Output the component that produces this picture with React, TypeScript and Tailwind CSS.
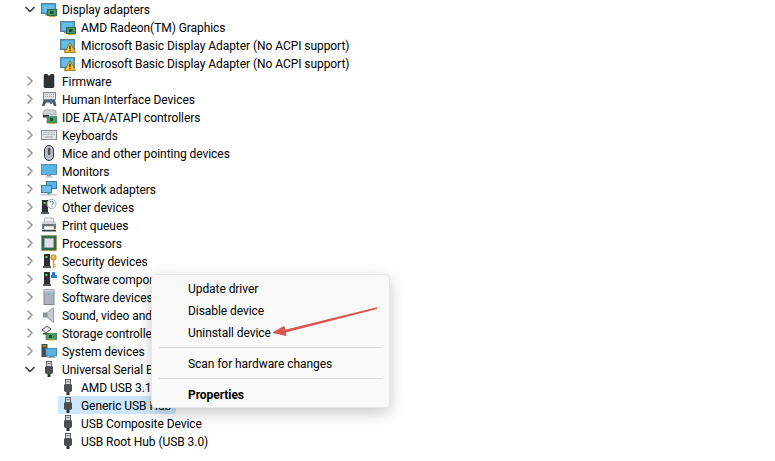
import React from 'react';

type IconName =
  | 'display' | 'displayWarn' | 'firmware' | 'hid' | 'ide' | 'keyboard' | 'mouse' | 'monitor'
  | 'network' | 'other' | 'printer' | 'cpu' | 'security' | 'software' | 'softdev' | 'sound'
  | 'storage' | 'system' | 'usb';

const Card = () => (
  <g>
    <rect x="6.5" y="8.5" width="9" height="6" fill="#4a9a68" stroke="#2c6a49" />
    <rect x="9" y="10" width="3.5" height="3" fill="#1f4d35" />
    <rect x="8" y="15" width="6.5" height="1" fill="#e0a52c" />
  </g>
);

const Screen = () => (
  <g>
    <rect x="0.5" y="2.5" width="14" height="10" fill="#4aa6dc" stroke="#5f7f95" />
    <rect x="2" y="4" width="11" height="7" fill="#63c0ec" />
    <rect x="4" y="13" width="5" height="1.5" fill="#8a9aa6" />
  </g>
);

const Warn = () => (
  <g>
    <path d="M10 5.5 L15.5 15.5 L4.5 15.5 Z" fill="#f5c02c" stroke="#8f6a10" strokeWidth="0.8" />
    <rect x="9.4" y="8.6" width="1.2" height="3.8" fill="#222" />
    <rect x="9.4" y="13.1" width="1.2" height="1.2" fill="#222" />
  </g>
);

const Tower = () => (
  <g>
    <rect x="3" y="1" width="6" height="12" fill="#2b2f33" />
    <rect x="4.5" y="3" width="2" height="2" fill="#5ed06a" />
    <rect x="2" y="13" width="8" height="2" fill="#555b60" />
  </g>
);

const DeviceIcon = ({ name }: { name: IconName }) => {
  const art: Record<IconName, React.ReactNode> = {
    display: <><Screen /><Card /></>,
    displayWarn: <><Screen /><Warn /></>,
    firmware: (
      <g>
        <rect x="3" y="1" width="10" height="14" rx="1" fill="#2f3235" />
        <path d="M6.5 1 a1.5 1.5 0 0 0 3 0 Z" fill="#fff" />
        <path d="M2 3h1M2 5h1M2 7h1M2 9h1M2 11h1M2 13h1M13 3h1M13 5h1M13 7h1M13 9h1M13 11h1M13 13h1" stroke="#8a8f94" strokeWidth="1" />
      </g>
    ),
    hid: (
      <g>
        <rect x="2.5" y="1.5" width="12" height="7" fill="#dfe3e7" stroke="#80878d" />
        <path d="M4 3.5h9M4 5.5h9" stroke="#9aa1a7" strokeDasharray="1 1" />
        <path d="M1 15 L2.5 9 H14 L15.5 15 L13 15 L11.5 11.5 H5 L3.5 15 Z" fill="#50565c" />
        <rect x="9" y="8" width="2" height="5" fill="#3b78c4" />
      </g>
    ),
    ide: (
      <g>
        <path d="M2 3 L4 1 H14 L15 3 V6 H2 Z" fill="#cfd3d6" stroke="#7d8387" strokeWidth="0.6" />
        <rect x="2" y="6" width="6" height="2.5" fill="#3d4246" />
        <rect x="6" y="7.5" width="10" height="6.5" fill="#4a9a68" stroke="#2c6a49" strokeWidth="0.6" />
        <rect x="9" y="9" width="3" height="3" fill="#1f4d35" />
        <rect x="8" y="14" width="6" height="1" fill="#e0a52c" />
      </g>
    ),
    keyboard: (
      <g>
        <rect x="0.5" y="3.5" width="15" height="9" fill="#e3e6e9" stroke="#868c92" />
        <path d="M2 5.5h12M2 7.5h12" stroke="#9ea5ab" strokeDasharray="1 0.6" />
        <path d="M4 10h8" stroke="#9ea5ab" />
      </g>
    ),
    mouse: (
      <g>
        <rect x="3.5" y="0.5" width="9" height="15" rx="4.5" fill="#b9bfc4" stroke="#33383c" />
        <rect x="6.8" y="3" width="2.6" height="7" rx="1" fill="#4d5358" />
      </g>
    ),
    monitor: (
      <g>
        <rect x="0.5" y="1.5" width="15" height="10" fill="#58b4e6" stroke="#5b8fae" />
        <rect x="6" y="11.5" width="4" height="2" fill="#9aa6ae" />
        <rect x="4" y="13.5" width="8" height="1" fill="#b4bdc3" />
      </g>
    ),
    network: (
      <g>
        <rect x="5.5" y="0.5" width="10" height="7" fill="#58b4e6" stroke="#3f7ca3" />
        <rect x="0.5" y="4.5" width="10" height="7" fill="#6cc0ea" stroke="#3f7ca3" />
        <rect x="0" y="13" width="16" height="1.5" fill="#c4cbd0" />
        <path d="M5.5 11.5 L8 14 L10.5 11.5 Z" fill="#48b25a" />
      </g>
    ),
    other: (
      <g>
        <rect x="1" y="1" width="6" height="12" fill="#2b2f33" />
        <rect x="2.5" y="3" width="2" height="2" fill="#5ed06a" />
        <rect x="0" y="13" width="8" height="2" fill="#555b60" />
        <circle cx="10.5" cy="5" r="4.5" fill="#fff" stroke="#9aa4ad" />
        <path d="M9 3.8 a1.6 1.6 0 1 1 2 1.6 v0.8 M11 7.2 v0.8" fill="none" stroke="#3a78c4" strokeWidth="1" />
      </g>
    ),
    printer: (
      <g>
        <path d="M4 1 H12 L13 5 H3 Z" fill="#eef0f2" stroke="#8a9095" strokeWidth="0.6" />
        <path d="M1 5 H15 V12 H1 Z" fill="#6f767c" />
        <rect x="1" y="5" width="14" height="2" fill="#cdd2d6" />
        <rect x="3" y="9" width="10" height="4" fill="#fff" stroke="#6f767c" strokeWidth="0.6" />
        <rect x="12" y="7.5" width="2" height="1" fill="#5ed06a" />
        <rect x="1" y="13" width="14" height="1.5" fill="#3c4145" />
      </g>
    ),
    cpu: (
      <g>
        <rect x="0.5" y="0.5" width="15" height="15" fill="#2e6b4b" stroke="#b98f2e" strokeDasharray="1 0.6" />
        <rect x="3.5" y="3.5" width="9" height="9" fill="#dfe2e4" stroke="#a8adb1" strokeWidth="0.6" />
      </g>
    ),
    security: (
      <g>
        <Tower />
        <circle cx="12.5" cy="4.5" r="2.7" fill="#e3b040" stroke="#a87a1c" strokeWidth="0.7" />
        <circle cx="12.5" cy="3.8" r="0.7" fill="#fff" />
        <rect x="11.8" y="7" width="1.5" height="8" fill="#d39d2f" />
        <rect x="13.2" y="11" width="1.2" height="1" fill="#d39d2f" />
        <rect x="13.2" y="13" width="1.2" height="1" fill="#d39d2f" />
      </g>
    ),
    software: (
      <g>
        <Tower />
        <rect x="11" y="1" width="3" height="3" fill="#2f7fd0" />
        <rect x="10" y="4" width="6" height="3" fill="#2f7fd0" />
      </g>
    ),
    softdev: (
      <g>
        <rect x="3" y="0.5" width="10" height="15" fill="#a9b4bd" stroke="#7f8b94" />
        <rect x="3" y="0.5" width="10" height="2" fill="#c9d1d7" />
        <rect x="7" y="4" width="2" height="2" fill="#57c4d8" />
      </g>
    ),
    sound: (
      <g>
        <rect x="2" y="5.5" width="4" height="5" fill="#8e959a" />
        <path d="M6 5.5 L12.5 0.5 V15.5 L6 10.5 Z" fill="#c5cacd" stroke="#7f868b" strokeWidth="0.7" />
      </g>
    ),
    storage: (
      <g>
        <path d="M1 5 L6 1 L10 4 L5 8 Z" fill="#e4e7e9" stroke="#3c4145" strokeWidth="0.9" />
        <rect x="2" y="8" width="5" height="1.5" fill="#3c4145" />
        <rect x="5" y="8.5" width="11" height="6" fill="#4a9a68" stroke="#2c6a49" strokeWidth="0.6" />
        <rect x="8" y="10" width="3" height="3" fill="#1f4d35" />
        <rect x="7" y="14.5" width="7" height="1" fill="#e0a52c" />
      </g>
    ),
    system: (
      <g>
        <rect x="0.5" y="1" width="6" height="13" fill="#43484d" />
        <rect x="1.5" y="2.5" width="4" height="1" fill="#f0c040" />
        <rect x="5" y="5.5" width="10.5" height="7.5" fill="#58b4e6" stroke="#4c87ad" />
        <rect x="8" y="13" width="5" height="1" fill="#4c87ad" />
        <rect x="6.5" y="14" width="8" height="1" fill="#a9b4bd" />
      </g>
    ),
    usb: (
      <g>
        <rect x="5.5" y="0.5" width="5" height="5" fill="#d9dcde" stroke="#5c6267" />
        <rect x="6.8" y="2" width="0.9" height="1.2" fill="#444" />
        <rect x="8.5" y="2" width="0.9" height="1.2" fill="#444" />
        <path d="M4 5.5 H12 V12 L10.5 13 H5.5 L4 12 Z" fill="#4b4f52" />
        <rect x="6.5" y="13" width="3" height="3" fill="#2d3033" />
      </g>
    ),
  };
  return (
    <svg width="16" height="16" viewBox="0 0 16 16" className="shrink-0">
      {art[name]}
    </svg>
  );
};

const Chevron = ({ open }: { open?: boolean }) => (
  <span className="w-[19px] h-[18px] flex items-center justify-center shrink-0">
    <svg width="12" height="12" viewBox="0 0 12 12" fill="none">
      {open ? (
        <path d="M1.5 4 L6 8.5 L10.5 4" stroke="#333" strokeWidth="1.5" />
      ) : (
        <path d="M3.5 1.5 L8 6 L3.5 10.5" stroke="#999" strokeWidth="1.5" />
      )}
    </svg>
  </span>
);

type Row = { label: string; icon: IconName; open?: boolean; child?: boolean; selected?: boolean };

const rows: Row[] = [
  { label: 'Display adapters', icon: 'display', open: true },
  { label: 'AMD Radeon(TM) Graphics', icon: 'display', child: true },
  { label: 'Microsoft Basic Display Adapter (No ACPI support)', icon: 'displayWarn', child: true },
  { label: 'Microsoft Basic Display Adapter (No ACPI support)', icon: 'displayWarn', child: true },
  { label: 'Firmware', icon: 'firmware' },
  { label: 'Human Interface Devices', icon: 'hid' },
  { label: 'IDE ATA/ATAPI controllers', icon: 'ide' },
  { label: 'Keyboards', icon: 'keyboard' },
  { label: 'Mice and other pointing devices', icon: 'mouse' },
  { label: 'Monitors', icon: 'monitor' },
  { label: 'Network adapters', icon: 'network' },
  { label: 'Other devices', icon: 'other' },
  { label: 'Print queues', icon: 'printer' },
  { label: 'Processors', icon: 'cpu' },
  { label: 'Security devices', icon: 'security' },
  { label: 'Software components', icon: 'software' },
  { label: 'Software devices', icon: 'softdev' },
  { label: 'Sound, video and game controllers', icon: 'sound' },
  { label: 'Storage controllers', icon: 'storage' },
  { label: 'System devices', icon: 'system' },
  { label: 'Universal Serial Bus controllers', icon: 'usb', open: true },
  { label: 'AMD USB 3.10 eXtensible Host Controller', icon: 'usb', child: true },
  { label: 'Generic USB Hub', icon: 'usb', child: true, selected: true },
  { label: 'USB Composite Device', icon: 'usb', child: true },
  { label: 'USB Root Hub (USB 3.0)', icon: 'usb', child: true },
];

const TreeRow = ({ row }: { row: Row }) => {
  if (row.child) {
    return (
      <div className="h-[18px] flex items-center pl-[58px]">
        <div className={`h-[18px] flex items-center pl-[2px] pr-[5px] rounded-[2px] ${row.selected ? 'bg-[#cce8ff]' : ''}`}>
          <DeviceIcon name={row.icon} />
          <span className="ml-[5px] mt-[2px] whitespace-nowrap">{row.label}</span>
        </div>
      </div>
    );
  }
  return (
    <div className="h-[18px] flex items-center pl-[20px]">
      <Chevron open={row.open} />
      <span className="ml-[2px]"><DeviceIcon name={row.icon} /></span>
      <span className="ml-[5px] mt-[2px] whitespace-nowrap">{row.label}</span>
    </div>
  );
};

const MenuItem = ({ label, bold }: { label: string; bold?: boolean }) => (
  <div className={`h-[22px] flex items-center pl-[36px] pt-[2px] ${bold ? 'font-bold' : ''}`}>{label}</div>
);

const Separator = () => <div className="h-px bg-[#d9d9d9] mx-[7px]" />;

export default function App() {
  return (
    <div className="relative w-[775px] h-[461px] overflow-hidden bg-white text-[12px] leading-[18px] tracking-[-0.06px] text-black font-['Roboto',sans-serif]">
      <div className="flex flex-col">
        {rows.map((row, i) => (
          <TreeRow key={i} row={row} />
        ))}
      </div>

      {/* context menu */}
      <div className="absolute left-[151px] top-[274px] w-[239px] h-[134px] py-[2px] bg-[#f9f9f9] rounded-[5px] border border-[#e6e6e6] shadow-[0_5px_16px_rgba(0,0,0,0.22)]">
        <MenuItem label="Update driver" />
        <MenuItem label="Disable device" />
        <MenuItem label="Uninstall device" />
        <div className="h-[9px] flex flex-col justify-center"><Separator /></div>
        <MenuItem label="Scan for hardware changes" />
        <div className="h-[9px] flex flex-col justify-center"><Separator /></div>
        <MenuItem label="Properties" bold />
      </div>

      {/* red annotation arrow */}
      <svg className="absolute left-0 top-0 pointer-events-none" width="775" height="461" viewBox="0 0 775 461" fill="none">
        <path d="M377 307.2 L284 330 L284.6 332.8 L377 309 Z" fill="#d9534f" />
        <path d="M273 332.5 L284 326.5 L286 335.5 Z" fill="#d9534f" stroke="#d9534f" />
      </svg>
    </div>
  );
}
